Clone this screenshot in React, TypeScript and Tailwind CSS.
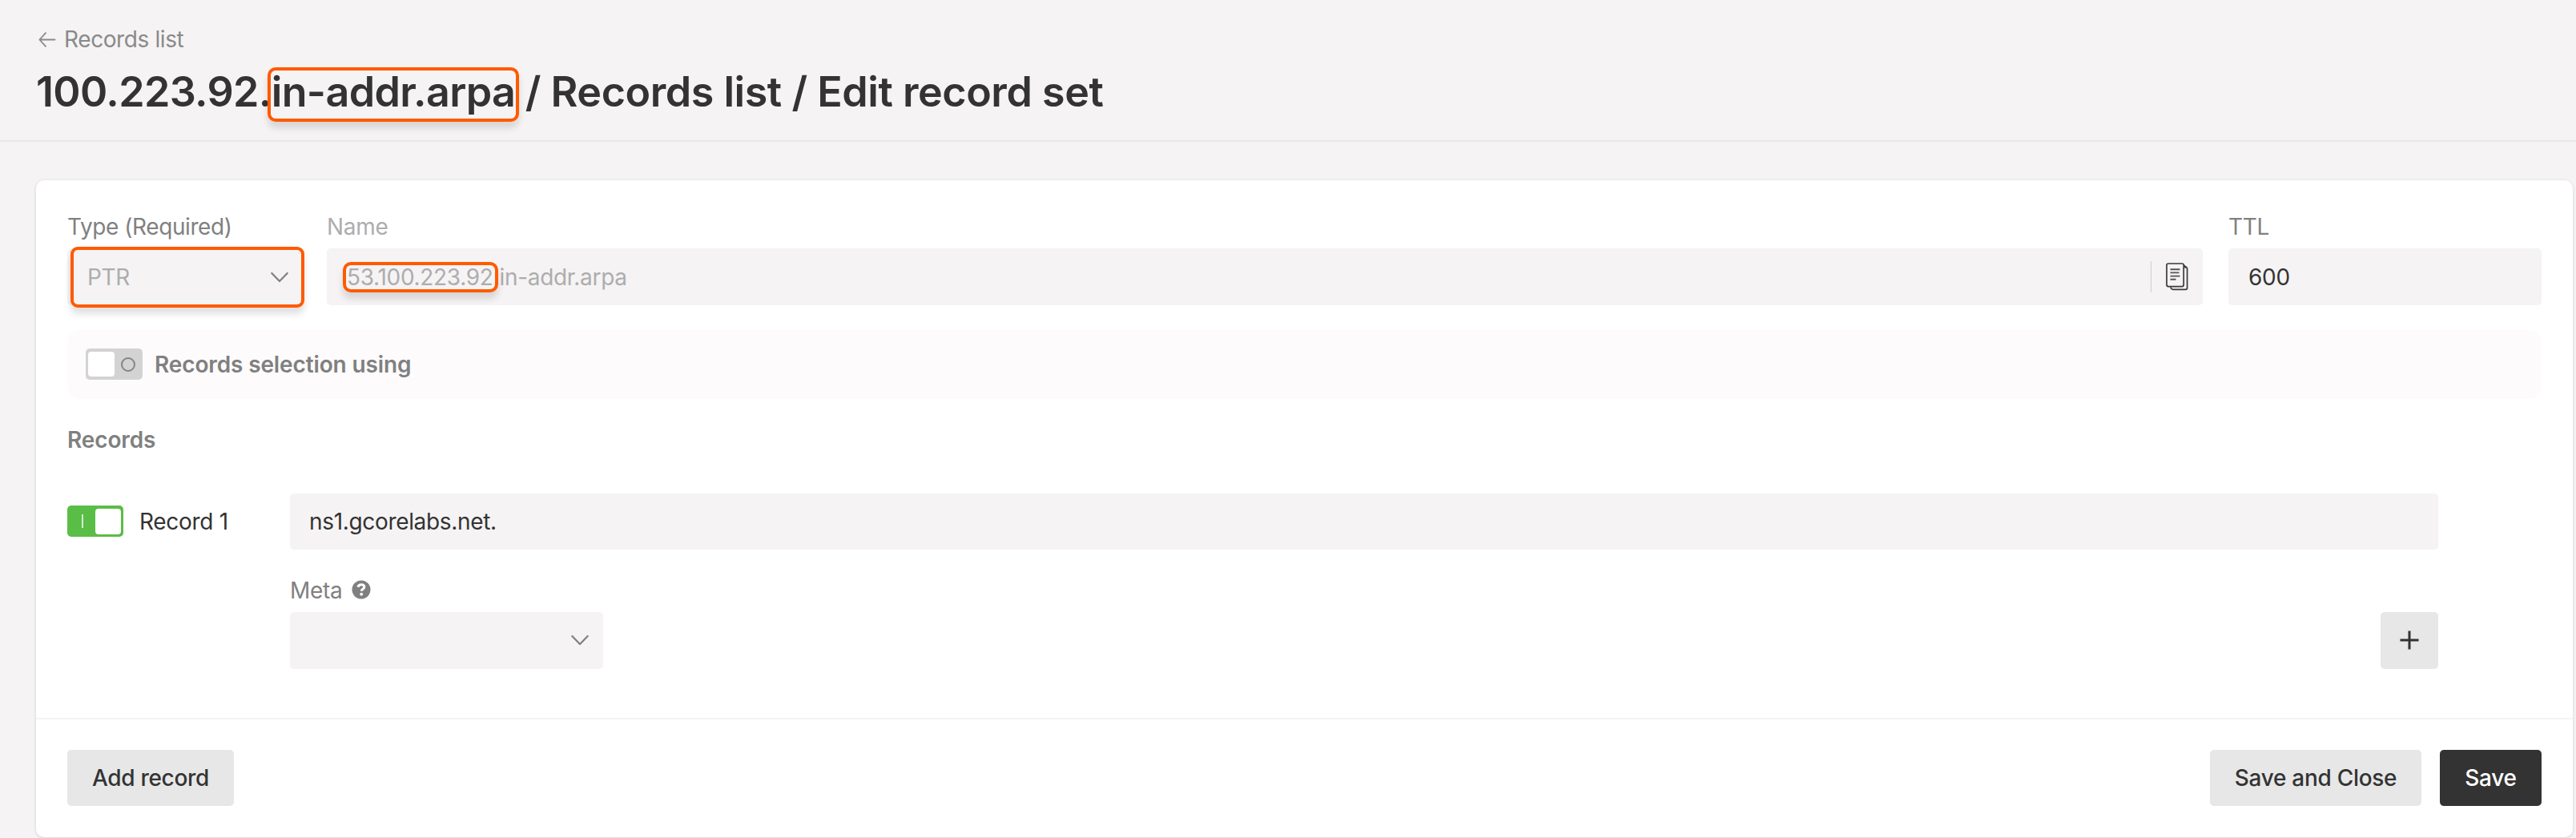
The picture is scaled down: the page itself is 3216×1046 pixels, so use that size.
import type { ReactNode } from "react";

function Chevron() {
  return (
    <svg width="24" height="14" viewBox="0 0 24 14" fill="none" stroke="#808080" strokeWidth="2.2" strokeLinecap="round" strokeLinejoin="round">
      <path d="M2.300 2l9.700 10L21.700 2" />
    </svg>
  );
}

function BackArrow() {
  return (
    <svg width="22" height="19" viewBox="0 0 22 19" fill="none" stroke="#8a8a8a" strokeWidth="1.8" strokeLinecap="round" strokeLinejoin="round">
      <path d="M9 1.2L1.4 9.5L9 17.8M1.4 9.5H20.5" />
    </svg>
  );
}

function CopyIcon() {
  return (
    <svg width="28" height="35" viewBox="0 0 28 35" fill="none" stroke="#3a3a3a" strokeWidth="1.7" strokeLinejoin="round">
      <path d="M22.300 2.800L26.600 6.800V31.500a1.800 1.800 0 0 1-1.800 1.800H9a3 3 0 0 1-3-3" />
      <path d="M22.300 5.500h4" />
      <rect x="1" y="1" width="21.2" height="28.6" rx="2" fill="#f5f3f4" />
      <path d="M5.500 8.200h12M5.500 12.400h11M5.500 16.600h12M5.500 20.800h7" stroke="#555" strokeWidth="1.900" />
    </svg>
  );
}

function HelpIcon() {
  return (
    <svg className="-mt-[3px]" width="24" height="24" viewBox="0 0 24 24" fill="none">
      <circle cx="12" cy="12" r="11.5" fill="#808080" />
      <path d="M7.900 8.700c.6-1.900 2-2.900 4.100-2.900 2.300 0 3.800 1.200 3.800 3 0 2.600-3.500 2.400-3.500 4.900" stroke="#fff" strokeWidth="3.100" />
      <circle cx="12.200" cy="17.700" r="1.900" fill="#fff" />
    </svg>
  );
}

function PlusIcon() {
  return (
    <svg className="-mt-[2px]" width="24" height="24" viewBox="0 0 24 24" stroke="#333" strokeWidth="3">
      <path d="M12 .5v23M.5 12h23" />
    </svg>
  );
}

function Toggle({ on }: { on?: boolean }) {
  return on ? (
    <span className="-mt-[1px] flex h-[39px] w-[70px] items-center justify-between rounded-[5px] bg-[#5abd46] pl-[18px] pr-[3px]">
      <span className="h-[17px] w-[2px] bg-[#d5efcf]" />
      <span className="h-8 w-8 rounded-[4px] bg-white" />
    </span>
  ) : (
    <span className="-mt-[1px] flex h-[39px] w-[71px] items-center justify-between rounded-[5px] bg-[#d3d3d3] pl-[3px] pr-[9px]">
      <span className="h-[31px] w-[33px] rounded-[4px] bg-white" />
      <span className="h-[18px] w-[18px] rounded-full border-2 border-[#858585]" />
    </span>
  );
}

function Marker({ className }: { className: string }) {
  return (
    <span className={"pointer-events-none absolute border-4 border-[#ff5a00] shadow-[0_8px_8px_rgba(0,0,0,0.12)] " + className} />
  );
}

function Button({ dark, className, children }: { dark?: boolean; className: string; children: ReactNode }) {
  return (
    <button
      className={
        "flex h-[70px] items-center justify-center whitespace-nowrap rounded-[5px] font-medium " +
        (dark ? "bg-[#333] text-white " : "bg-[#e7e7e7] text-[#333] ") +
        className
      }
    >
      {children}
    </button>
  );
}

export default function App() {
  return (
    <div className="h-[1046px] w-[3216px] overflow-hidden bg-[#f5f3f4] font-['Inter',sans-serif] text-[28px] leading-9 tracking-[-0.3px] text-[#333]">
      <header className="h-[177px] border-b-2 border-[#e9e7e8] pl-[45px] pt-[31px]">
        <a className="flex items-center gap-[10px] pl-[3px] tracking-[-0.4px] text-[#8a8a8a]">
          <BackArrow />
          <span>Records list</span>
        </a>
        <h1 className="mt-4 whitespace-nowrap text-[52px] font-semibold leading-[64px] tracking-[-0.64px]">
          100.223.92.
          <span className="relative">
            in-addr.arpa
            <Marker className="-left-[5px] top-[1px] h-[68px] w-[314px] rounded-[10px]" />
          </span>{" "}
          <span className="tracking-[-0.46px]">/ Records list / Edit record set</span>
        </h1>
      </header>

      <main className="ml-[45px] mt-12 h-[820px] w-[3167px] rounded-[10px] bg-white shadow-[0_1px_4px_rgba(0,0,0,0.14)]">
        <section className="h-[671px] px-[39px] pt-10">
          <div className="flex">
            <div className="w-[324px]">
              <div className="tracking-[-0.42px] text-[#808080]">Type (Required)</div>
              <div className="relative mt-[9px] flex h-[71px] w-[292px] items-center justify-between rounded-[5px] bg-[#f5f3f4] pl-[25px] pr-[15px] text-[#adadad]">
                PTR
                <Chevron />
                <Marker className="-top-[2px] left-1 h-[76px] w-[292px] rounded-[9px]" />
              </div>
            </div>
            <div className="w-[2342px]">
              <div className="text-[#adadad]">Name</div>
              <div className="mt-[9px] flex h-[71px] items-center justify-between rounded-[5px] bg-[#f5f3f4] pl-[25px] pr-[18px] text-[#adadad]">
                <span className="whitespace-nowrap">
                  <span className="relative">
                    53.100.223.92
                    <Marker className="-left-[5px] -top-[2px] h-[38px] w-[194px] rounded-[10px]" />
                  </span>
                  .in-addr.arpa
                </span>
                <span className="flex items-center gap-[18px]">
                  <span className="h-[39px] w-px bg-[#d0d0d0]" />
                  <CopyIcon />
                </span>
              </div>
            </div>
            <div className="ml-8 w-[391px]">
              <div className="text-[#808080]">TTL</div>
              <div className="mt-[9px] flex h-[71px] items-center rounded-[5px] bg-[#f5f3f4] pl-[25px]">600</div>
            </div>
          </div>

          <div className="mt-[31px] flex h-[86px] items-center gap-[15px] rounded-2xl bg-[#fdfbfc] pl-[23px] font-semibold tracking-[-0.13px] text-[#808080]">
            <Toggle />
            <span>Records selection using</span>
          </div>

          <h2 className="mt-[33px] font-semibold tracking-[-0.13px] text-[#808080]">Records</h2>

          <div className="mt-[49px] flex">
            <div className="flex h-[70px] w-[278px] items-center gap-[20px]">
              <Toggle on />
              <span>Record 1</span>
            </div>
            <div className="w-[2682px]">
              <div className="flex h-[70px] items-center rounded-[5px] bg-[#f5f3f4] pl-6 tracking-[-0.33px]">ns1.gcorelabs.net.</div>
              <div className="mt-[33px] flex items-center gap-3 text-[#808080]">
                <span>Meta</span>
                <HelpIcon />
              </div>
              <div className="mt-[9px] flex justify-between">
                <div className="flex h-[71px] w-[391px] items-center justify-end rounded-[5px] bg-[#f5f3f4] pb-px pr-[17px]">
                  <Chevron />
                </div>
                <button className="flex h-[71px] w-[72px] items-center justify-center rounded-[5px] bg-[#e7e7e7]">
                  <PlusIcon />
                </button>
              </div>
            </div>
          </div>
        </section>

        <footer className="flex items-center border-t-2 border-[#f4f4f4] px-[39px] pt-[38px]">
          <Button className="w-[208px]">Add record</Button>
          <Button className="ml-auto w-[264px]">Save and Close</Button>
          <Button dark className="ml-[23px] w-[127px]">Save</Button>
        </footer>
      </main>
    </div>
  );
}
